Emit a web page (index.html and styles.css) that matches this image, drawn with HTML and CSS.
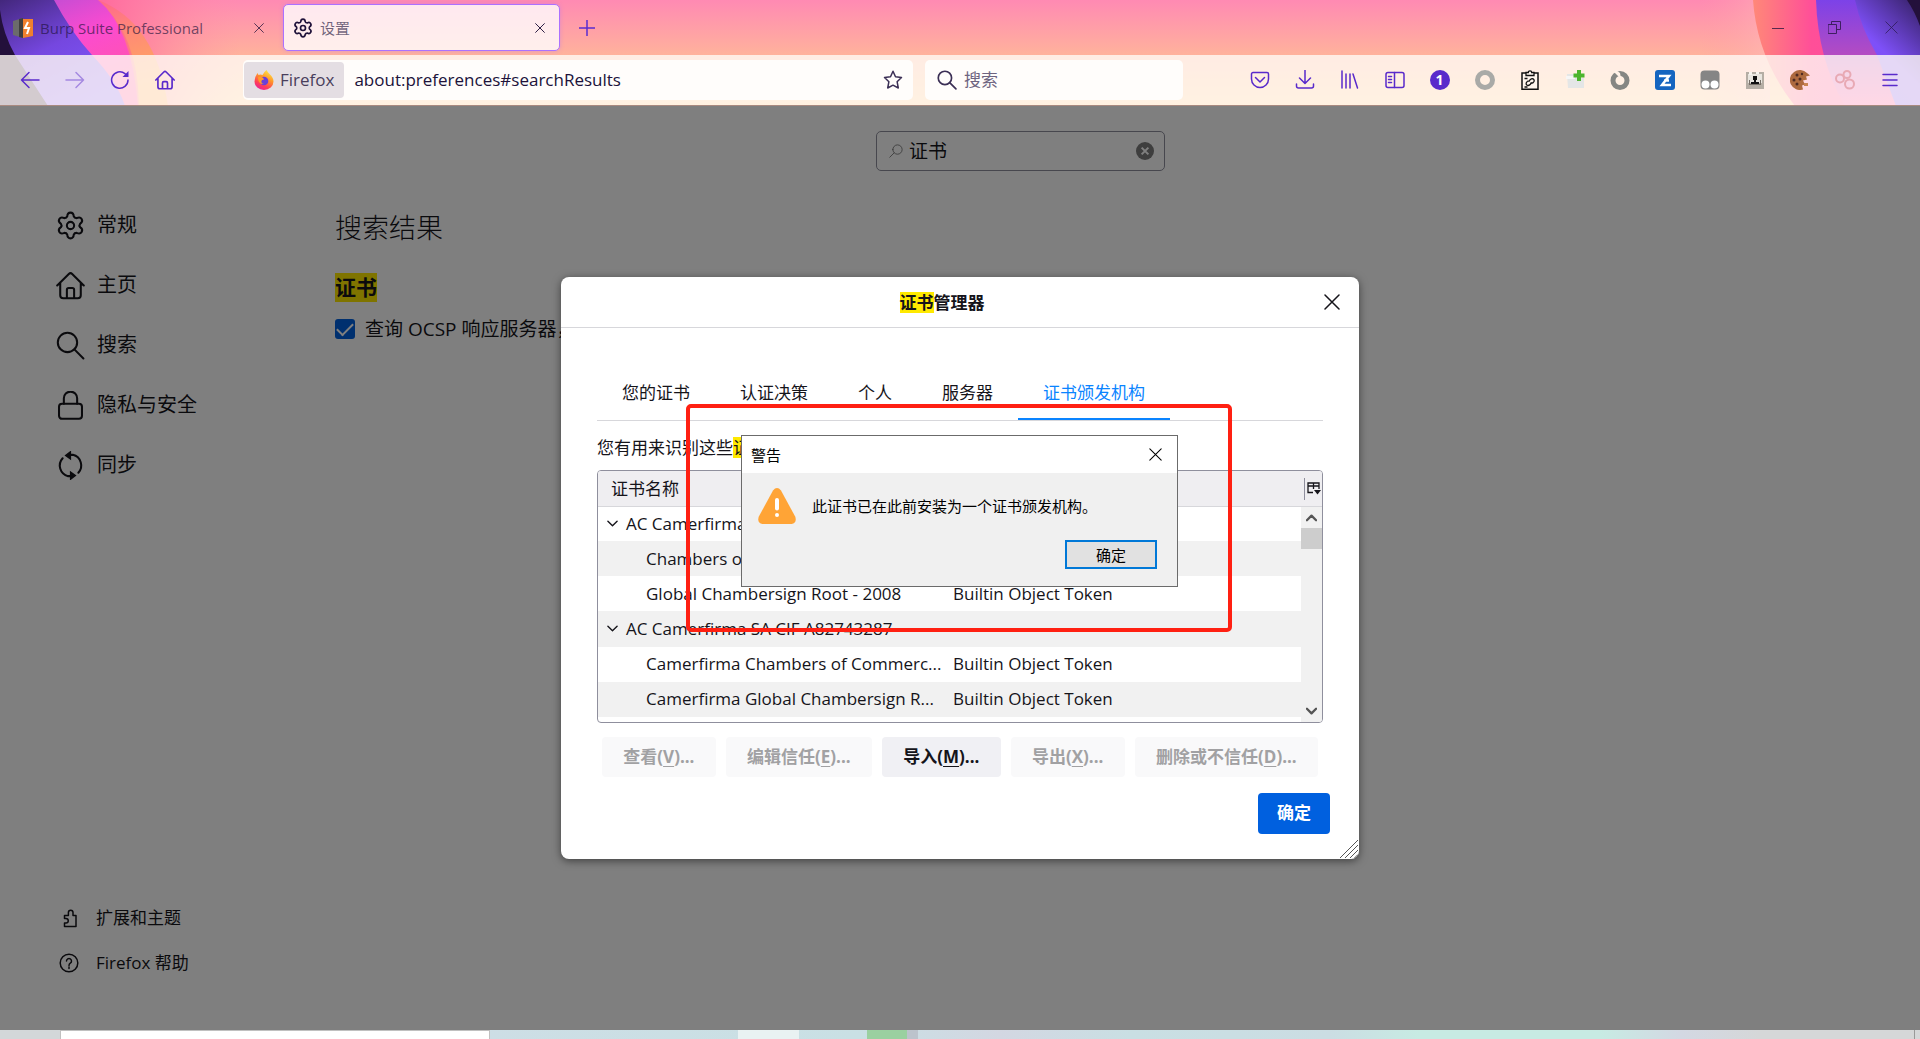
FILE: index.html
```html
<!DOCTYPE html>
<html lang="zh-CN">
<head>
<meta charset="utf-8">
<title>设置</title>
<link rel="stylesheet" href="styles.css">
</head>
<body>
<svg class="defs" aria-hidden="true">
  <symbol id="gear" viewBox="0 0 24 24"><path d="M9.3 4.5C9.5.3 14.5.3 14.7 4.5Q15.2 5.9 17.1 5.9C20.9 4 23.4 8.3 19.9 10.6Q18.9 12 19.9 13.4C23.4 15.7 20.9 20 17.1 18.1Q15.2 18.1 14.7 19.5C14.5 23.7 9.5 23.7 9.3 19.5Q8.8 18.1 6.9 18.1C3.1 20 .6 15.7 4.1 13.4Q5.1 12 4.1 10.6C.6 8.3 3.1 4 6.9 5.9Q8.8 5.9 9.3 4.5Z"/><circle cx="12" cy="12" r="3"/></symbol>
  <symbol id="home" viewBox="0 0 24 24"><path d="M1 12 10.600 2.400a2 2 0 0 1 2.800 0L23 12M3.500 10v10a2.500 2.500 0 0 0 2.500 2.500h12a2.500 2.500 0 0 0 2.500-2.500V10M9 22v-6.500a1.500 1.500 0 0 1 1.500-1.500h3a1.500 1.500 0 0 1 1.500 1.500V22"/></symbol>
  <symbol id="search" viewBox="0 0 24 24"><circle cx="9.500" cy="9.500" r="8"/><path d="m15.200 15.200 7.500 7.500"/></symbol>
  <symbol id="close" viewBox="0 0 16 16"><path d="m1 1 14 14M15 1 1 15"/></symbol>
</svg>

<header class="chrome">
  <svg class="art art-left" viewBox="0 0 240 106" aria-hidden="true">
    <defs>
      <linearGradient id="l1" x1="0" y1="0" x2=".6" y2="1"><stop offset="0" stop-color="#43277c"/><stop offset=".5" stop-color="#7547df"/><stop offset="1" stop-color="#7f59ff"/></linearGradient>
      <linearGradient id="l2" x1="0" y1="0" x2=".5" y2="1"><stop offset="0" stop-color="#a24be0"/><stop offset=".5" stop-color="#fb45dc"/><stop offset="1" stop-color="#ff4fae"/></linearGradient>
      <linearGradient id="l3" x1="0" y1="0" x2=".4" y2="1"><stop offset="0" stop-color="#ff4f9c"/><stop offset=".5" stop-color="#ff8878"/><stop offset="1" stop-color="#ffac5c"/></linearGradient>
      <linearGradient id="l4"><stop offset="0" stop-color="#ff6a9c"/><stop offset="1" stop-color="#ff8fa8" stop-opacity="0"/></linearGradient>
    </defs>
    <path fill="url(#l4)" d="M98 0h142v106H160z"/>
    <path fill="url(#l3)" d="M0 0h98q58 22 70 106H0z"/>
    <path fill="#ff6196" opacity=".6" d="M0 0h98q40 34 41 106H0z"/>
    <path fill="url(#l2)" d="M0 0h98q34 28 40 106H0z" opacity=".85"/>
    <path fill="url(#l1)" d="M0 0h54q17 32 38 55 25 26 33 51H0z"/>
    <path fill="#23103b" d="M0 10q3 24 15 45l33 51H0z"/>
  </svg>
  <svg class="art art-right" viewBox="0 0 240 106" aria-hidden="true">
    <defs>
      <linearGradient id="r0"><stop offset="0" stop-color="#ff9aa8" stop-opacity="0"/><stop offset="1" stop-color="#ffb8b8"/></linearGradient>
      <linearGradient id="r1"><stop offset="0" stop-color="#ff8878"/><stop offset=".35" stop-color="#ff4f98"/><stop offset="1" stop-color="#ff48a2"/></linearGradient>
      <linearGradient id="r2" x1="0" y1="0" x2="0" y2="1"><stop offset="0" stop-color="#7c42e8"/><stop offset=".55" stop-color="#b74cc0"/><stop offset="1" stop-color="#ff4fa8"/></linearGradient>
      <linearGradient id="r3" x1="1" y1="0" x2=".4" y2="1"><stop offset="0" stop-color="#352064"/><stop offset=".6" stop-color="#7e50f8"/><stop offset="1" stop-color="#7852ff"/></linearGradient>
    </defs>
    <path fill="url(#r0)" d="M20 0h70v106H20z" opacity=".6"/>
    <path fill="url(#r1)" d="M73 0q4 58 42 106h125V0z"/>
    <path fill="url(#r2)" d="M136 0q2 60 29 106h75V0z"/>
    <path fill="url(#r3)" d="M175 0q6 28 22 55l19 51h24V0z"/>
    <path fill="#23103b" d="M227 0q8 12 13 26V0z"/>
  </svg>

  <div class="tabstrip">
    <div class="tab">
      <svg class="icon20" viewBox="0 0 20 20" aria-hidden="true"><path fill="#6b6b6b" d="M0 3 10 0v20L0 17z"/><path fill="#3f3f3f" d="M6 1 10 0v20l-4-1z"/><path fill="#f0802e" d="M10 1h10v17l-10 2z"/><path d="m15 4-3 6h4l-2 6" fill="none" stroke="#fff" stroke-width="2"/></svg>
      <span class="tab-label">Burp Suite Professional</span>
      <button class="tab-close" aria-label="关闭标签页"><svg class="line icon10"><use href="#close"/></svg></button>
    </div>
    <div class="tab selected">
      <svg class="line icon20 bold"><use href="#gear"/></svg>
      <span class="tab-label">设置</span>
      <button class="tab-close" aria-label="关闭标签页"><svg class="line icon10"><use href="#close"/></svg></button>
    </div>
    <button class="new-tab" aria-label="新标签页"><svg class="line" width="16" height="16" viewBox="0 0 16 16"><path d="M8 0v16M0 8h16"/></svg></button>
    <div class="window-controls">
      <button aria-label="最小化"><svg class="line" width="12" height="12" viewBox="0 0 12 12"><path d="M0 6.500h12"/></svg></button>
      <button aria-label="还原"><svg class="line" width="13" height="13" viewBox="0 0 13 13"><path d="M.5 3.500h8v9h-8zM3.500 3.500v-3h9v8h-4"/></svg></button>
      <button aria-label="关闭"><svg class="line icon13"><use href="#close"/></svg></button>
    </div>
  </div>

  <nav class="toolbar">
    <button class="tool" aria-label="后退"><svg class="line icon20" viewBox="0 0 20 20"><path d="M19 10H1.500M9 2.500 1.500 10 9 17.500"/></svg></button>
    <button class="tool faded" aria-label="前进"><svg class="line icon20" viewBox="0 0 20 20"><path d="M1 10h17.500M11 2.500l7.500 7.500-7.500 7.500"/></svg></button>
    <button class="tool" aria-label="刷新"><svg class="line icon20" viewBox="0 0 20 20"><path d="M18 10a8.200 8.200 0 1 1-3-6.300l2 1.800"/><path class="solid" d="M18.500 1v6h-6z"/></svg></button>
    <button class="tool" aria-label="主页"><svg class="line icon20 bold"><use href="#home"/></svg></button>
    <div class="urlbar">
      <span class="identity">
        <svg class="icon20" viewBox="0 0 20 20" aria-hidden="true">
          <defs><linearGradient id="fx" x1=".8" y1="0" x2=".3" y2="1"><stop offset="0" stop-color="#fff04a"/><stop offset=".4" stop-color="#ff9a2a"/><stop offset=".75" stop-color="#ff4055"/><stop offset="1" stop-color="#e8209a"/></linearGradient></defs>
          <path fill="url(#fx)" d="M12.500 0q1 2 3 4 4 3.500 4 7.500a9.500 8.500 0 0 1-19 0Q.5 7 3.500 3l1 2q2-1 4 0Q10 2 12.500 0z"/><circle cx="10" cy="11" r="4.300" fill="#6b3fd8"/><path fill="#ff9a2a" d="M4 7q4-1 6 2 0 1-2 1-2 3 2 4-6 1-6-7z"/>
        </svg>
        Firefox
      </span>
      <input class="url-input" aria-label="地址" value="about:preferences#searchResults">
      <button class="star" aria-label="加入书签"><svg class="line icon20" viewBox="0 0 20 20"><path d="m10 1.300 2.500 5.500 6 .7-4.400 4.200 1.200 6.300L10 15.200 4.700 18l1.200-6.300L1.500 7.500l6-.7z"/></svg></button>
    </div>
    <div class="searchbar">
      <svg class="line icon20 bold"><use href="#search"/></svg>
      <input aria-label="搜索" placeholder="搜索">
    </div>
    <div class="extensions">
      <button class="tool" aria-label="Pocket"><svg class="line icon20" viewBox="0 0 20 20"><path d="M3 2.500h14a1.500 1.500 0 0 1 1.500 1.500v5a8.500 8.500 0 0 1-17 0V4A1.500 1.500 0 0 1 3 2.500zM5.500 7.500 10 12l4.500-4.500"/></svg></button>
      <button class="tool" aria-label="下载"><svg class="line icon20" viewBox="0 0 20 20"><path d="M10 0v13M4.500 8l5.500 5.500L15.500 8M1.500 14v2a2 2 0 0 0 2 2h13a2 2 0 0 0 2-2v-2"/></svg></button>
      <button class="tool" aria-label="我的足迹"><svg class="line icon20" viewBox="0 0 20 20"><path d="M2 1v17M6 4v14M10 4v14M13 4l4.500 14"/></svg></button>
      <button class="tool" aria-label="侧栏"><svg class="line icon20" viewBox="0 0 20 20"><rect x="1" y="2.500" width="18" height="15" rx="2"/><path d="M9.500 2.500v15M3.500 6.500h3M3.500 9.500h3M3.500 12.500h3"/></svg></button>
      <button class="tool" aria-label="容器"><span class="count">1</span></button>
      <button class="tool" aria-label="代理"><svg class="icon20" viewBox="0 0 20 20"><circle cx="10" cy="10" r="7.500" fill="none" stroke="#a9aaa7" stroke-width="5"/></svg></button>
      <button class="tool" aria-label="剪贴板"><svg class="icon20" viewBox="0 0 20 20"><path fill="#fff6ee" stroke="#111" stroke-width="1.500" d="M2 3h16v16.200H2z"/><path fill="#fff6ee" stroke="#111" stroke-width="1.300" d="M6 2.500h2.300a1.700 1.700 0 0 1 3.400 0H14v3H6z"/><path fill="none" stroke="#111" stroke-width="1.300" d="M9 11.500q1-2.500 3-2.800 2.800.3 2 2.800-.8 1.800-3 1.800M11.500 12.300q-1 3-3.200 3.200-2.800-.3-2-2.800.8-1.800 3-1.800M4.500 8.500h3M4.500 17h3"/></svg></button>
      <button class="tool" aria-label="添加"><svg class="icon20" viewBox="0 0 20 20"><path fill="#e4e6e6" d="M2 4h9v4h8v10H3z"/><path fill="#f6f6f6" d="M1 6h9v3H1z"/><path stroke="#4cb52e" stroke-width="4" d="M14 0v11M8.500 5.500h11"/></svg></button>
      <button class="tool" aria-label="重放"><svg class="icon20" viewBox="0 0 20 20"><circle cx="10" cy="10.500" r="7" fill="none" stroke="#858683" stroke-width="5"/><path fill="#fff1e7" d="m6 0 4 3 1 5-2-1L4 2z"/></svg></button>
      <button class="tool" aria-label="翻译"><svg class="icon20" viewBox="0 0 20 20"><rect width="20" height="20" rx="3" fill="#1565c0"/><path fill="none" stroke="#fff" stroke-width="2.500" d="M4 6h10l-7 9h9M9 10.500h5"/></svg></button>
      <button class="tool" aria-label="脚本"><svg class="icon20" viewBox="0 0 20 20"><rect x=".5" y=".5" width="19" height="19" rx="4" fill="#858585"/><circle cx="5.500" cy="14.500" r="4" fill="#fff"/><circle cx="14.500" cy="14.500" r="4" fill="#fff"/></svg></button>
      <button class="tool" aria-label="用户代理"><svg class="icon20" viewBox="0 0 20 20"><rect x="1" y="2" width="18" height="17" fill="#b5aea5"/><path fill="#e8e5df" d="M3 4h14v9H3z"/><path fill="#111" d="M8 6h4v4H11v2h3v2H6v-2h3v-2H8z"/><path fill="#77716a" d="M4 10h1v4h10v-4h1v5H4z"/><path fill="#f7f4ef" d="M4 2h3v3H4zM11 2h3v2h-3z"/></svg></button>
      <button class="tool" aria-label="Cookie"><svg class="icon20" viewBox="0 0 20 20"><path fill="#ae6a3f" d="M17 3a10 10 0 1 0-4 16.500l-1-4 3-1-2-4 4-1-1-3 4-1z"/><g fill="#4e2b22"><circle cx="7" cy="5" r="1.500"/><circle cx="12" cy="4" r="1.200"/><circle cx="4" cy="10" r="1.500"/><circle cx="10" cy="9" r="1.500"/><circle cx="7" cy="14" r="1.500"/></g><path fill="#c98452" d="M14 13h4v3h-4z"/></svg></button>
      <button class="tool" aria-label="分组"><svg class="icon20" viewBox="0 0 20 20"><g fill="none" stroke="#e8a9b4" stroke-width="2"><circle cx="5" cy="8.500" r="4"/><circle cx="12" cy="4.500" r="3.500"/><circle cx="14.500" cy="14" r="4.500"/></g></svg></button>
      <button class="tool" aria-label="菜单"><svg class="line icon20" viewBox="0 0 20 20"><path d="M3 4.500h14M3 10h14M3 15.500h14"/></svg></button>
    </div>
  </nav>
</header>

<main class="prefs">
  <aside class="sidebar">
    <a class="category" href="#general"><svg class="line icon28"><use href="#gear"/></svg>常规</a>
    <a class="category" href="#home-page"><svg class="line icon28"><use href="#home"/></svg>主页</a>
    <a class="category" href="#search-page"><svg class="line icon28"><use href="#search"/></svg>搜索</a>
    <a class="category" href="#privacy"><svg class="line icon28" viewBox="0 0 24 24"><rect x="2.500" y="10.500" width="19" height="12.500" rx="2.500"/><path d="M6.500 10.500v-4.500a5.500 5.500 0 0 1 11 0v4.500"/></svg>隐私与安全</a>
    <a class="category" href="#sync"><svg class="line icon28" viewBox="0 0 24 24"><path d="M5.500 6a9 9 0 0 0 4.500 14.800h3M18.500 18a9 9 0 0 0-4.500-14.800h-3"/><path class="solid" d="m7 3.800 5.500-4.300v8.200zM17 20.200l-5.500-3.900v8.200z"/></svg>同步</a>
    <div class="sidebar-footer">
      <a class="footer-link" href="#addons"><svg class="line icon20" viewBox="0 0 20 20"><path d="M6 18.500h11V7.500h-3V4.500a2.300 2.300 0 0 0-4.600 0v3H5.500v3H7a2.200 2.200 0 0 1 0 4.500H5.500v3.500z"/></svg>扩展和主题</a>
      <a class="footer-link" href="#help"><svg class="line icon20" viewBox="0 0 20 20"><circle cx="10" cy="10" r="8.800"/><path d="M7.500 8a2.500 2.500 0 1 1 3.800 2.200q-1.300.8-1.300 2.300M10 14v1.500"/></svg>Firefox 帮助</a>
    </div>
  </aside>
  <section class="results">
    <div class="search-row">
      <label class="pref-search">
        <svg class="line icon14 flip"><use href="#search"/></svg>
        <input aria-label="在设置中查找" value="证书">
        <button class="clear" aria-label="清除"><svg viewBox="0 0 16 16" width="18" height="18"><circle cx="8" cy="8" r="8" fill="#7c7c7c"/><path stroke="#fff" stroke-width="1.800" d="m5 5 6 6M11 5l-6 6"/></svg></button>
      </label>
    </div>
    <h1>搜索结果</h1>
    <h2><mark>证书</mark></h2>
    <label class="check"><input type="checkbox" checked>查询 OCSP 响应服务器，</label>
  </section>

  <div class="overlay">
    <section class="dialog" role="dialog" aria-labelledby="dialog-title">
      <header class="dialog-head">
        <h2 id="dialog-title"><mark>证书</mark>管理器</h2>
        <button class="dialog-close" aria-label="关闭"><svg class="line icon16"><use href="#close"/></svg></button>
      </header>
      <div class="dialog-body">
        <div class="cert-tabs" role="tablist">
          <button role="tab">您的证书</button>
          <button role="tab">认证决策</button>
          <button role="tab">个人</button>
          <button role="tab">服务器</button>
          <button role="tab" aria-selected="true">证书颁发机构</button>
        </div>
        <p class="hint">您有用来识别这些<mark>证书</mark></p>
        <div class="tree">
          <table>
            <colgroup><col class="col-name"><col><col class="col-scroll"></colgroup>
            <thead>
              <tr><th>证书名称</th><th></th><th class="picker"><button aria-label="选择列"><svg width="14" height="13" viewBox="0 0 14 13"><path fill="none" stroke="#15141a" stroke-width="1.300" d="M6 10.500H1V1h11v6M1 4h11M6.500 1v6"/><path fill="#15141a" d="M7 8h7l-3.500 4.500z"/></svg></button></th></tr>
            </thead>
            <tbody>
              <tr class="parent"><td colspan="2"><svg class="line twisty" viewBox="0 0 12 8"><path d="m1 1 5 5 5-5"/></svg>AC Camerfirma S.A.</td>
                <td class="scroll" rowspan="7"><div class="scrollbar"><svg class="line arrow" viewBox="0 0 12 8"><path d="m1 7 5-5 5 5"/></svg><span class="thumb"></span><svg class="line arrow" viewBox="0 0 12 8"><path d="m1 1 5 5 5-5"/></svg></div></td></tr>
              <tr><td>Chambers of Commerce Root - …</td><td>Builtin Object Token</td></tr>
              <tr><td>Global Chambersign Root - 2008</td><td>Builtin Object Token</td></tr>
              <tr class="parent"><td colspan="2"><svg class="line twisty" viewBox="0 0 12 8"><path d="m1 1 5 5 5-5"/></svg>AC Camerfirma SA CIF A82743287</td></tr>
              <tr><td>Camerfirma Chambers of Commerc...</td><td>Builtin Object Token</td></tr>
              <tr><td>Camerfirma Global Chambersign R...</td><td>Builtin Object Token</td></tr>
              <tr class="rest"><td colspan="2"></td></tr>
            </tbody>
          </table>
        </div>
        <div class="actions">
          <button disabled>查看(<u>V</u>)...</button>
          <button disabled>编辑信任(<u>E</u>)...</button>
          <button>导入(<u>M</u>)...</button>
          <button disabled>导出(<u>X</u>)...</button>
          <button disabled>删除或不信任(<u>D</u>)...</button>
        </div>
      </div>
      <footer class="dialog-foot"><button class="primary">确定</button></footer>
      <svg class="grip" viewBox="0 0 18 18" aria-hidden="true"><path d="M0 18 18 0M5 18 18 5M10 18l8-8M14.500 18l3.500-3.500"/></svg>

      <div class="alert" role="alertdialog" aria-labelledby="alert-title">
        <div class="alert-head"><span id="alert-title">警告</span><button aria-label="关闭"><svg class="line icon13"><use href="#close"/></svg></button></div>
        <div class="alert-body">
          <svg width="38" height="36" viewBox="0 0 38 36" aria-hidden="true"><path fill="#ffa436" d="M15 2.500q4-4.800 8 0l14.300 26.300q1.800 6-3.800 7.200h-29Q-1.100 34.800.7 28.800z"/><path stroke="#fff" stroke-width="4" stroke-linecap="round" d="M19 12v8.500M19 27v.1"/></svg>
          <p>此证书已在此前安装为一个证书颁发机构。</p>
        </div>
        <button class="alert-ok">确定</button>
      </div>
      <div class="marker"></div>
    </section>
  </div>
</main>

<footer class="taskbar">
  <span class="task-search"></span><span class="task-app"></span><span class="task-active"></span><span class="task-edge"></span>
  <time class="clock">11:05</time><span class="task-desktop"></span>
</footer>
</body>
</html>
```
FILE: styles.css
```css
* { box-sizing: border-box; }
body {
  margin: 0;
  min-height: 100vh;
  display: flex;
  flex-direction: column;
  font: 17px/24px "Open Sans", "Noto Sans CJK SC", sans-serif;
  color: #15141a;
}
button, input { font: inherit; color: inherit; padding: 0; border: 0; background: none; }
a { color: inherit; text-decoration: none; }
h1, h2, p { margin: 0; }
mark { background: #ffe900; color: inherit; }
svg { flex: none; display: block; }
.defs { position: absolute; width: 0; height: 0; }
.line { fill: none; stroke: currentColor; stroke-width: 1.500; stroke-linecap: round; stroke-linejoin: round; }
.bold { stroke-width: 2; }
.solid { fill: currentColor; stroke: none; }
.icon10 { width: 10px; height: 10px; }
.icon13 { width: 13px; height: 13px; stroke-width: 1.300; }
.icon14 { width: 14px; height: 14px; }
.icon16 { width: 16px; height: 16px; stroke-width: 1.500; }
.icon20 { width: 20px; height: 20px; }
.icon28 { width: 29px; height: 29px; stroke-width: 1.700; }
.flip { transform: scaleX(-1); }

/* browser chrome */
.chrome {
  position: relative;
  background: linear-gradient(#ff8ab3, #ffb29c 55px, #ffcf93);
  border-bottom: 1px solid #a98a80;
  overflow: hidden;
}
.art { position: absolute; top: 0; width: 240px; height: 106px; }
.art-left { left: 0; }
.art-right { right: 0; }
.tabstrip { position: relative; display: flex; height: 55px; align-items: center; }
.tab {
  display: flex;
  align-items: center;
  gap: 7px;
  width: 277px;
  height: 47px;
  margin-right: 3px;
  padding: 0 13px;
  font-size: 15px;
  color: #20123acc;
}
.tab + .tab { padding: 0 11px 0 9px; }
.tab.selected {
  border: 1px solid #ab71ff;
  border-radius: 5px;
  background: #ffffffcc;
  box-shadow: 0 0 4px #ab71ff66;
}
.tab:first-child { width: 280px; }
.tab.selected svg { color: #20123a; }
.tab-label { flex: 1; opacity: .8; white-space: nowrap; }
.tab-close { padding: 3px; }
.new-tab { width: 48px; display: grid; place-items: center; color: #5b2bd0; }
.window-controls { display: flex; margin-left: auto; color: #20123a; opacity: .75; }
.window-controls button { width: 57px; height: 40px; display: grid; place-items: center; }
.window-controls svg { stroke-width: 1; }
.toolbar {
  position: relative;
  display: flex;
  align-items: center;
  height: 50px;
  padding: 0 8px 0 7px;
  background: #fffaf5cc;
}
.tool { width: 45px; height: 40px; display: grid; place-items: center; color: #592acb; }
.faded { opacity: .45; }
.urlbar, .searchbar {
  display: flex;
  align-items: center;
  height: 40px;
  border-radius: 5px;
  background: #fffdfb;
}
.urlbar { flex: 1; margin-left: 56px; padding: 0 10px 0 1px; }
.identity {
  display: flex;
  align-items: center;
  gap: 6px;
  height: 36px;
  padding: 0 10px;
  border-radius: 4px;
  background: #e4dee3;
  color: #4a3f5c;
}
.url-input { flex: 1; min-width: 0; margin-left: 10px; color: #20123a; }
.star { color: #3b2f55; }
.searchbar { width: 258px; margin: 0 54px 0 12px; padding: 0 12px; gap: 7px; color: #3b2f55; }
.searchbar input { width: 100%; }
.searchbar input::placeholder { color: #6e6480; opacity: 1; }
.extensions { display: flex; }
.count {
  width: 20px;
  height: 20px;
  border-radius: 50%;
  background: #592acb;
  color: #fff;
  font-size: 14px;
  font-weight: 700;
  line-height: 20px;
}

/* preferences page */
.prefs { position: relative; flex: 1; display: flex; overflow: hidden; background: #fff; }
.sidebar {
  display: flex;
  flex-direction: column;
  width: 335px;
  padding: 89px 0 45px 56px;
}
.category { display: flex; align-items: center; gap: 12px; height: 60px; font-size: 20px; }
.sidebar-footer { margin-top: auto; padding-left: 3px; }
.footer-link { display: flex; align-items: center; gap: 17px; height: 45px; font-size: 17px; }
.results { width: 830px; padding-top: 25px; }
.search-row { display: flex; justify-content: flex-end; }
.pref-search {
  display: flex;
  align-items: center;
  gap: 6px;
  width: 289px;
  height: 40px;
  padding: 0 10px 0 12px;
  border: 1px solid #8f8f9d;
  border-radius: 5px;
  font-size: 19px;
}
.pref-search .flip { color: #777; }
.pref-search input { flex: 1; min-width: 0; }
.results h1 { margin-top: 37px; font-size: 27px; font-weight: 300; line-height: 40px; }
.results h2 { margin-top: 25px; font-size: 21px; line-height: 29px; }
.results h2 mark, .dialog mark { display: inline-block; }
.check { display: flex; align-items: center; gap: 10px; margin-top: 13px; font-size: 19px; line-height: 28px; }
.check input {
  appearance: none;
  width: 20px;
  height: 20px;
  margin: 0;
  border-radius: 3px;
  background: #0060df;
  display: grid;
  place-items: center;
}
.check input::after {
  content: "";
  width: 14px;
  height: 7px;
  border: solid #fff;
  border-width: 0 0 2px 2px;
  transform: translateY(-2px) rotate(-45deg);
}

/* certificate manager */
.overlay {
  position: absolute;
  inset: 0;
  display: grid;
  place-items: center;
  background: rgba(0, 0, 0, .5);
}
.dialog {
  position: relative;
  width: 798px;
  border-radius: 8px;
  background: #fff;
  box-shadow: 0 2px 8px rgba(0, 0, 0, .5);
}
.dialog-head {
  display: flex;
  align-items: center;
  height: 51px;
  padding: 0 19px;
  border-bottom: 1px solid #d7d7db;
}
.dialog-head h2 { flex: 1; padding-right: 20px; font-size: 17px; line-height: 21px; text-align: center; }
.dialog-body { padding: 39px 36px 0; }
.cert-tabs { display: flex; border-bottom: 1px solid #d7d7db; }
.cert-tabs button { height: 53px; padding: 0 25px; border-bottom: 2px solid transparent; }
.cert-tabs [aria-selected] { color: #0a84ff; border-color: #0a84ff; }
.hint { margin: 16px 0 12px; line-height: 21px; }
.hint mark { line-height: 21px; }
.tree { border: 1px solid #8f8f9d; border-radius: 4px; overflow: hidden; }
table { width: 100%; border-collapse: collapse; table-layout: fixed; font-size: 17px; white-space: nowrap; }
.col-name { width: 347px; }
.col-scroll { width: 21px; }
th { height: 35px; padding: 0 0 0 13px; text-align: left; font-weight: 400; background: #efeef1; border-bottom: 1px solid #d7d7db; }
td { height: 35px; padding: 0 8px; }
td:first-child { padding: 0 0 0 48px; overflow: hidden; }
.parent td:first-child { padding-left: 28px; }
tbody tr:nth-child(even) { background: #f1f1f1; }
.parent .twisty { display: inline-block; width: 11px; height: 8px; margin: 0 8px 2px -19px; }
.rest td { height: 5px; }
.picker { padding: 0; }
.picker button { display: grid; place-items: center; width: 18px; height: 22px; margin-left: 3px; border-left: 1px solid #8f8f9d; }
td.scroll { padding: 0; background: #f1f1f1; }
.scrollbar { display: flex; flex-direction: column; align-items: center; height: 215px; }
.arrow { width: 11px; height: 21px; color: #555; stroke-width: 2.500; }
.thumb { flex: none; width: 100%; height: 21px; margin-bottom: auto; background: #cdcdcd; }
.actions { display: flex; gap: 10px; margin: 14px 5px 0; }
.actions button, .primary {
  height: 40px;
  padding: 0 19px;
  border-radius: 4px;
  background: #f0f0f4;
  font-weight: 700;
  white-space: nowrap;
}
.actions button { flex: 1 1 auto; }
.actions button:disabled { background: #f9f9fa; color: #a1a1a3; }
u { text-underline-offset: 3px; text-decoration-thickness: 1px; }
.dialog-foot { display: flex; justify-content: flex-end; padding: 16px 29px 25px; }
.dialog-foot .primary { height: 41px; background: #0060df; color: #fff; }
.grip { position: absolute; right: 1px; bottom: 1px; width: 18px; height: 18px; stroke: #555; }

/* warning window and highlight frame */
.alert {
  position: absolute;
  left: 180px;
  top: 158px;
  width: 437px;
  display: flex;
  flex-direction: column;
  border: 1px solid #6b6b6b;
  background: #f0f0f0;
  color: #000;
  font-size: 15px;
}
.alert-head { display: flex; align-items: center; justify-content: space-between; height: 37px; padding: 0 15px 0 9px; background: #fff; }
.alert-body { display: flex; align-items: center; gap: 16px; padding: 15px 16px 16px; }
.alert-ok {
  align-self: flex-end;
  width: 92px;
  height: 29px;
  margin: 0 20px 17px 0;
  border: 2px solid #0078d7;
  background: #e1e1e1;
}
.marker {
  position: absolute;
  left: 125px;
  top: 127px;
  width: 546px;
  height: 228px;
  border: 4px solid #ff2012;
  border-radius: 5px;
}

/* taskbar */
.taskbar {
  display: flex;
  height: 9px;
  overflow: hidden;
  padding-left: 60px;
  background: linear-gradient(90deg, #d3d7d9 60px, #cddee5 480px, #c9e0e4 860px, #d3d7e2 1000px, #c9dfe3 1130px, #cbdde3 1330px, #c7ebe3 1420px, #c7ebe3 1600px, #d3d8e3 1680px, #d5d7d8 1760px);
}
.task-search { width: 430px; border: solid #c0c0c0; border-width: 1px 1px 0; background: #fff; }
.task-app { width: 61px; margin-left: 248px; background: #e9f2f2; }
.task-active { width: 40px; margin-left: 68px; background: #9ad0a0; }
.task-edge { width: 11px; background: #bcc3cc; }
.clock { margin-left: auto; padding-top: 5px; font-size: 15px; line-height: 16px; color: #000; }
.task-desktop { width: 6px; margin-left: 88px; border-left: 1px solid #999; }
```
